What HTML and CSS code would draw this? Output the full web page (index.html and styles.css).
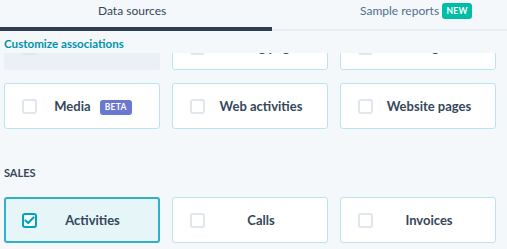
FILE: index.html
```html
<!DOCTYPE html>
<html>
<head>
    <title>Data sources</title>
    <link rel="stylesheet" href="styles.css">
</head>
<body>
    <div class="tabs">
        <div class="tab tab-active">Data sources</div>
        <div class="tab tab-second">Sample reports <span class="badge badge-new">NEW</span></div>
    </div>

    <a class="link" href="#">Customize associations</a>

    <div class="viewport">
        <div class="list">
            <div class="grid">
                <div class="card card-disabled">
                    <span class="check"></span>
                    <span class="label">Forms</span>
                </div>
                <div class="card">
                    <span class="check"></span>
                    <span class="label">Landing pages</span>
                </div>
                <div class="card">
                    <span class="check"></span>
                    <span class="label">Marketing emails</span>
                </div>
            </div>

            <div class="grid grid-next">
                <div class="card">
                    <span class="check"></span>
                    <span class="label">Media <span class="badge badge-beta">BETA</span></span>
                </div>
                <div class="card">
                    <span class="check"></span>
                    <span class="label">Web activities</span>
                </div>
                <div class="card">
                    <span class="check"></span>
                    <span class="label">Website pages</span>
                </div>
            </div>

            <h2 class="section">SALES</h2>

            <div class="grid">
                <div class="card card-selected">
                    <span class="check check-on">
                        <svg width="11" height="9" viewBox="0 0 11 9"><polyline points="1.5,4.5 4.2,7 9.5,1.5" fill="none" stroke="#00a4bd" stroke-width="2.2" stroke-linecap="round" stroke-linejoin="round"/></svg>
                    </span>
                    <span class="label">Activities</span>
                </div>
                <div class="card">
                    <span class="check"></span>
                    <span class="label">Calls</span>
                </div>
                <div class="card">
                    <span class="check"></span>
                    <span class="label">Invoices</span>
                </div>
            </div>
        </div>
    </div>
</body>
</html>
```

FILE: styles.css
```css
body {
    font-family: Lato, "Open Sans", sans-serif;
    background-color: #f5f8fa;
    color: #33475b;
    margin: 0;
    padding: 0;
    width: 507px;
    height: 249px;
    overflow: hidden;
}

/* tabs */
.tabs {
    display: flex;
    height: 29px;
    border-bottom: 2px solid #e9eef3;
}

.tab {
    font-size: 12px;
    line-height: 22px;
    box-sizing: border-box;
}

.tab-active {
    width: 272px;
    padding-left: 98px;
    border-bottom: 4px solid #2d3e50;
    margin-bottom: -2px;
    height: 31px;
}

.tab-second {
    padding-left: 88px;
    color: #516f90;
    display: flex;
    align-items: center;
    height: 22px;
    gap: 3px;
}

.badge {
    display: inline-block;
    color: #fff;
    font-weight: 700;
    font-size: 8.5px;
    letter-spacing: 0.3px;
    border-radius: 3px;
    text-align: center;
}

.badge-new {
    background-color: #00bda5;
    width: 30px;
    height: 16px;
    line-height: 16px;
}

.badge-beta {
    background-color: #6a78d1;
    width: 32px;
    height: 15px;
    line-height: 15px;
    margin-left: 6px;
    vertical-align: 1px;
}

.link {
    display: block;
    margin: 4px 0 0 4px;
    height: 18px;
    font-size: 11.6px;
    line-height: 17px;
    font-weight: 700;
    color: #0091ae;
    text-decoration: none;
}

/* scrolling list */
.viewport {
    height: 196px;
    overflow: hidden;
}

.list {
    margin-top: -29px;
    padding: 0 11px 0 4px;
}

.grid {
    display: grid;
    grid-template-columns: 156px 156px 156px;
    gap: 12px;
}

.grid-next {
    margin-top: 13px;
}

.card {
    display: flex;
    align-items: center;
    box-sizing: border-box;
    height: 46px;
    padding: 0 10px 0 17px;
    background-color: #fff;
    border: 1px solid #b9e5ee;
    border-radius: 3px;
}

.card-disabled {
    background-color: #eaf0f6;
    border-color: #eaf0f6;
}

.card-selected {
    background-color: #e5f5f8;
    border: 2px solid #2fb0c6;
    padding-left: 16px;
}

.check {
    display: flex;
    align-items: center;
    justify-content: center;
    box-sizing: border-box;
    width: 15px;
    height: 15px;
    flex: none;
    background-color: #fff;
    border: 2px solid #dfe6ee;
    border-radius: 3px;
}

.card-disabled .check {
    background-color: #f5f8fa;
}

.check-on {
    border-color: #00a4bd;
}

.label {
    flex: 1;
    text-align: center;
    font-size: 13px;
    font-weight: 700;
    color: #33475b;
    white-space: nowrap;
}

.section {
    margin: 36px 0 16px 0;
    font-size: 11px;
    line-height: 16px;
    font-weight: 700;
    color: #33475b;
}
```
